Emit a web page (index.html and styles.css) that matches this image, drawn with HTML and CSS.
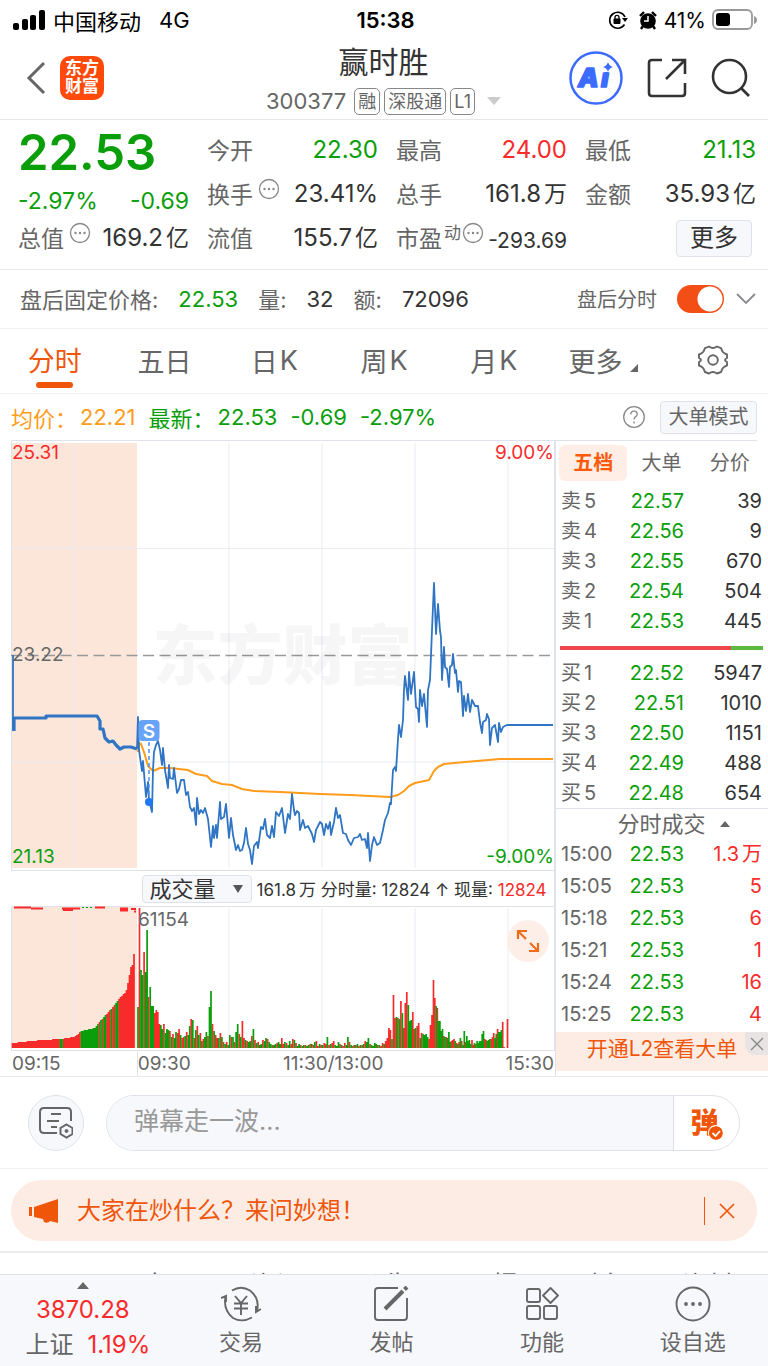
FILE: index.html
```html
<!DOCTYPE html>
<html lang="zh-CN">
<head>
<meta charset="utf-8">
<meta name="viewport" content="width=device-width, initial-scale=1">
<title>赢时胜 300377</title>
<link rel="stylesheet" href="styles.css">
</head>
<body>
<div class="status">
  <div class="status-side">
    <svg width="32" height="20" viewBox="0 0 32 20"><rect x="0" y="13" width="6" height="7" rx="2"/><rect x="9" y="9" width="6" height="11" rx="2"/><rect x="17" y="5" width="6" height="15" rx="2"/><rect x="26" y="0" width="6" height="20" rx="2"/></svg>
    <span class="carrier">中国移动</span><span>4G</span>
  </div>
  <b class="clock">15:38</b>
  <div class="status-side status-right">
    <svg width="20" height="20" viewBox="0 0 20 20"><path d="M16.500 14.500A8 8 0 1 1 17 7" fill="none" stroke="#000" stroke-width="1.600"/><path d="M14 8h6l-3 4z"/><rect x="5.500" y="8.500" width="7" height="5.500" rx="1"/><path d="M7 9V7.300a2 2 0 0 1 4 0V9" fill="none" stroke="#000" stroke-width="1.300"/></svg>
    <svg class="alarm" width="20" height="20" viewBox="0 0 20 20"><circle cx="10" cy="11" r="7.800"/><path d="M2 6l4-4M18 6l-4-4M5 16l-2 3M15 16l2 3" stroke="#000" stroke-width="2.400"/><path d="M10 6v5H6" fill="none" stroke="#fff" stroke-width="1.500"/></svg>
    <span>41%</span>
    <svg width="46" height="22" viewBox="0 0 46 22"><rect x="1" y="1" width="39" height="19" rx="5" fill="none" stroke="#999" stroke-width="1.800"/><rect x="4" y="4" width="14" height="13" rx="3"/><path d="M42 7q3 1 3 4t-3 4z" fill="#999"/></svg>
  </div>
</div>

<header class="head">
  <div class="head-left">
    <button class="plain" aria-label="返回"><svg width="20" height="34" viewBox="0 0 20 34"><path d="M18 2L3 17l15 15" fill="none" stroke="#666" stroke-width="3"/></svg></button>
    <div class="logo">东方<br>财富</div>
  </div>
  <div class="head-title">
    <h1>赢时胜</h1>
    <div class="code"><span>300377</span><i>融</i><i>深股通</i><i>L1</i><svg width="14" height="8" viewBox="0 0 14 8"><path d="M0 0h14L7 8z" fill="#ccc"/></svg></div>
  </div>
  <div class="head-right">
    <button class="plain" aria-label="Ai"><svg width="54" height="54" viewBox="0 0 54 54"><circle cx="27" cy="27" r="25.500" fill="#fff" stroke="#3b6cff" stroke-width="2.500"/><g fill="#3b6cff" stroke="#3b6cff" stroke-width="1.500" stroke-linejoin="round"><text x="9" y="36" class="ai-text">A</text><text x="32" y="36" class="ai-text">i</text></g><path d="M33 12h10v9H33z" fill="#fff"/><path d="M39 11q1 4 5 5-4 1-5 5-1-4-5-5 4-1 5-5z" fill="#3b6cff"/></svg></button>
    <button class="plain" aria-label="分享"><svg width="40" height="40" viewBox="0 0 40 40"><path d="M15 2H5q-3 0-3 3v30q0 3 3 3h30q3 0 3-3V25M25 2h13v14M37 3L19 21" fill="none" stroke="#333" stroke-width="2.600"/></svg></button>
    <button class="plain" aria-label="搜索"><svg width="40" height="40" viewBox="0 0 40 40"><circle cx="18.500" cy="18.500" r="16.500" fill="none" stroke="#333" stroke-width="2.600"/><path d="M30 30l8 8" stroke="#333" stroke-width="2.600"/></svg></button>
  </div>
</header>

<section class="quote">
  <div class="col">
    <strong class="price">22.53</strong>
    <div class="kv change"><b>-2.97%</b><b>-0.69</b></div>
    <div class="kv"><span>总值<svg class="dots" viewBox="0 0 22 22"><use href="#more-dots"/></svg></span><b>169.2<i>亿</i></b></div>
  </div>
  <div class="col">
    <div class="kv"><span>今开</span><b class="green">22.30</b></div>
    <div class="kv"><span>换手<svg class="dots" viewBox="0 0 22 22"><use href="#more-dots"/></svg></span><b>23.41%</b></div>
    <div class="kv"><span>流值</span><b>155.7<i>亿</i></b></div>
  </div>
  <div class="col">
    <div class="kv"><span>最高</span><b class="red">24.00</b></div>
    <div class="kv"><span>总手</span><b>161.8<i>万</i></b></div>
    <div class="kv pe"><span>市盈<sup>动</sup><svg class="dots tight" viewBox="0 0 22 22"><use href="#more-dots"/></svg></span><b>-293.69</b></div>
  </div>
  <div class="col">
    <div class="kv"><span>最低</span><b class="green">21.13</b></div>
    <div class="kv"><span>金额</span><b>35.93<i>亿</i></b></div>
    <div class="kv end"><button class="box more">更多</button></div>
  </div>
</section>

<section class="after">
  <span>盘后固定价格:</span><b class="green">22.53</b><span>量:</span><b>32</b><span>额:</span><b>72096</b>
  <label class="switch-label" for="after-switch">盘后分时</label>
  <input class="switch" id="after-switch" type="checkbox" checked>
  <button class="plain" aria-label="展开"><svg width="20" height="12" viewBox="0 0 20 12"><path d="M1 1l9 9 9-9" fill="none" stroke="#8a8a92" stroke-width="1.800"/></svg></button>
</section>

<nav class="tabs">
  <button class="on">分时</button><button>五日</button><button>日<i>K</i></button><button>周<i>K</i></button><button>月<i>K</i></button>
  <button>更多<svg class="corner" width="8" height="8" viewBox="0 0 8 8"><path d="M8 0v8H0z" fill="#666"/></svg></button>
  <button aria-label="设置"><svg width="32" height="32" viewBox="0 0 32 32" fill="none" stroke="#666" stroke-width="1.900"><path d="M16 4q2 0 4-1.500l4 1.700q1 2.300 1.500 3.300Q27 9.500 30 10.500v3.500q-2 1-2 2t2 2v3.500q-3 1-4.500 3Q25 26 24 28l-4 1.500Q18 28 16 28t-4 1.500L8 28q-1-2-1.500-3.500-1.500-2-4.500-3V18q2-1 2-2t-2-2v-3.500q3-1 4.500-3Q7 6.500 8 4.200l4-1.700Q14 4 16 4z" stroke-linejoin="round"/><circle cx="16" cy="16" r="4.800"/></svg></button>
</nav>

<div class="legend">
  <span class="amber name">均价：</span><span class="amber n1">22.21</span><span class="name">最新：</span><span class="n1">22.53</span><span class="n1">-0.69</span><span>-2.97%</span>
  <button class="plain help" aria-label="帮助"><svg width="24" height="24" viewBox="0 0 24 24"><circle cx="12" cy="12" r="10.300" fill="none" stroke="#888" stroke-width="1.300"/><path d="M8.800 9.500q0-3.300 3.200-3.300t3.200 3q0 1.500-1.800 2.700-1.400 1-1.400 2.600M12 16.500v2" fill="none" stroke="#888" stroke-width="1.300"/></svg></button>
  <button class="box mode">大单模式</button>
</div>

<main class="panel">
  <div class="charts">
    <div class="plot">
      <svg class="canvas" viewBox="11 440 544 430">
        <rect x="11" y="443" width="126" height="425" fill="#fce6da"/>
        <path class="gridline" d="M74 443V868M229 443V868M322 443V868M415 443V868M508 443V868M11 548.500H555M11 762H555"/>
        <path d="M11.500 870V440.500H554.500V870" fill="none" stroke="#dfe2ea"/>
        <path d="M11 655.500H555" stroke="#999" stroke-width="1.400" stroke-dasharray="11 5.500"/>
        <path id="avg-line" fill="none" stroke="#ff9c1b" stroke-width="2" stroke-linejoin="round"/>
        <path id="pre-line" fill="none" stroke="#3075c4" stroke-width="3.200" stroke-linejoin="round"/>
        <path id="price-line" fill="none" stroke="#3075c4" stroke-width="1.800" stroke-linejoin="round"/>
        <path d="M149 742v58" stroke="#4f93f8" stroke-width="1.500" stroke-dasharray="4 3"/>
        <circle cx="149" cy="802" r="4" fill="#1f78f0"/>
        <rect x="138.500" y="720" width="21" height="21" rx="4" fill="#67a4f9"/>
        <text x="149" y="737.500" text-anchor="middle" class="mark">S</text>
      </svg>
      <span class="water">东方财富</span>
      <span class="lab tl red">25.31</span><span class="lab tr red">9.00%</span>
      <span class="lab ml">23.22</span>
      <span class="lab bl green">21.13</span><span class="lab br green">-9.00%</span>
    </div>
    <div class="indicator">
      <div class="pick"><select aria-label="指标"><option>成交量</option></select><svg width="10" height="8" viewBox="0 0 10 8"><path d="M0 0h10L5 8z" fill="#555"/></svg></div>
      <span class="vol-text">161.8<i>万</i> 分时量: 12824 ↑ 现量: <em>12824</em></span>
    </div>
    <div class="plot">
      <svg class="canvas" viewBox="11 906 544 144">
        <rect x="11" y="907" width="126" height="141" fill="#fce6da"/>
        <path class="gridline" d="M74 908V1048M229 908V1048M322 908V1048M415 908V1048M508 908V1048"/>
        <path d="M11.500 1050V906.500H554.500V1050" fill="none" stroke="#dfe2ea"/>
        <path id="bars-red" stroke="#f82b2b" stroke-width="1.700"/>
        <path id="bars-green" stroke="#0a9e0a" stroke-width="1.700"/>
        <path d="M14 907.500h17M31 908.500h12M62 908.500h18M63 910h10M120 908.500h8M131 909h5M95 907.500h10M120 910.500h8M134 911.500h2" stroke="#f82b2b" stroke-width="2"/>
        <path d="M82 907.500h12" stroke="#0a9e0a" stroke-dasharray="2 2"/>
      </svg>
      <span class="lab vmax">61154</span>
      <button class="expand" aria-label="全屏"><svg width="24" height="24" viewBox="0 0 24 24" fill="none" stroke="#f26a1b" stroke-width="2.200"><path d="M2 10V2h9M2 2l8 8M22 14v8h-9M22 22l-8-8"/></svg></button>
    </div>
    <div class="times"><span>09:15</span><span class="open">09:30</span><span>11:30/13:00</span><span>15:30</span></div>
  </div>

  <aside class="book">
    <div class="book-tabs"><button class="on">五档</button><button>大单</button><button>分价</button></div>
    <table class="levels">
      <tr><th>卖<i>5</i></th><td>22.57</td><td>39</td></tr>
      <tr><th>卖<i>4</i></th><td>22.56</td><td>9</td></tr>
      <tr><th>卖<i>3</i></th><td>22.55</td><td>670</td></tr>
      <tr><th>卖<i>2</i></th><td>22.54</td><td>504</td></tr>
      <tr><th>卖<i>1</i></th><td>22.53</td><td>445</td></tr>
    </table>
    <div class="ratio"></div>
    <table class="levels">
      <tr><th>买<i>1</i></th><td>22.52</td><td>5947</td></tr>
      <tr><th>买<i>2</i></th><td>22.51</td><td>1010</td></tr>
      <tr><th>买<i>3</i></th><td>22.50</td><td>1151</td></tr>
      <tr><th>买<i>4</i></th><td>22.49</td><td>488</td></tr>
      <tr><th>买<i>5</i></th><td>22.48</td><td>654</td></tr>
    </table>
    <button class="deal-head">分时成交<svg width="10" height="6" viewBox="0 0 10 6"><path d="M0 6h10L5 0z" fill="#666"/></svg></button>
    <table class="levels deals">
      <tr><th>15:00</th><td>22.53</td><td>1.3<i>万</i></td></tr>
      <tr><th>15:05</th><td>22.53</td><td>5</td></tr>
      <tr><th>15:18</th><td>22.53</td><td>6</td></tr>
      <tr><th>15:21</th><td>22.53</td><td>1</td></tr>
      <tr><th>15:24</th><td>22.53</td><td>16</td></tr>
      <tr><th>15:25</th><td>22.53</td><td>4</td></tr>
    </table>
    <div class="promo"><a href="#">开通L2查看大单</a><button class="promo-x" aria-label="关闭"><svg width="14" height="14" viewBox="0 0 14 14"><path d="M1 1l12 12M13 1L1 13" stroke="#888" stroke-width="1.400"/></svg></button></div>
  </aside>
</main>

<section class="danmu">
  <button class="round" aria-label="弹幕设置"><svg width="34" height="32" viewBox="0 0 34 32" fill="none" stroke="#666" stroke-width="2"><path d="M18 26H5q-4 0-4-4V5q0-4 4-4h23q4 0 4 4v9M12 7h10M8 14h12M12 20h6"/><path d="M27.500 17.500l6 3.500v6l-6 3.500-6-3.500v-6z" fill="#f7f8fb"/><circle cx="27.500" cy="24" r="1.500" fill="#666" stroke-width="1"/></svg></button>
  <div class="bullet"><input type="text" aria-label="弹幕" placeholder="弹幕走一波..."><button class="send">弹<svg width="14" height="14" viewBox="0 0 14 14"><circle cx="7" cy="7" r="7" fill="#f0560a"/><path d="M3.500 7l3 3 4.500-5" fill="none" stroke="#fff" stroke-width="1.800"/></svg></button></div>
</section>

<section class="ask">
  <div class="ask-pill">
    <svg width="30" height="26" viewBox="0 0 30 26" fill="#f0560a"><path d="M0 9h3v9H0zM5 9L29 1v24l-8-2q-2 3-6 1l-1-3-9-2z"/></svg>
    <a href="#">大家在炒什么？来问妙想！</a>
    <button class="ask-x" aria-label="关闭"><svg width="16" height="16" viewBox="0 0 16 16"><path d="M1 1l14 14M15 1L1 15" stroke="#f0560a" stroke-width="1.700"/></svg></button>
  </div>
</section>

<nav class="subtabs"><a class="on" href="#">股吧</a><a href="#">盘口</a><a href="#">资讯</a><a href="#">公告</a><a href="#">研报</a><a href="#">财务</a><a href="#">资料</a></nav>

<nav class="bottom">
  <a class="index" href="#"><svg width="12" height="7" viewBox="0 0 12 7"><path d="M0 7h12L6 0z" fill="#666"/></svg><span class="red">3870.28</span><span class="index-name">上证<b class="red">1.19%</b></span></a>
  <a href="#"><svg width="40" height="36" viewBox="0 0 40 36" fill="none" stroke="#666" stroke-width="1.900"><path d="M11 4.500Q20-1 29 4.500q10 8 7 20M31 31.500Q21 37 12 32 2 24 4.500 11M0 12l5-2v6M40 23l-5 3v-6M14 10l6 7 6-7M13 17.500h14M13 22.500h14M20 17v12"/></svg>交易</a>
  <a href="#"><svg width="36" height="36" viewBox="0 0 36 36" fill="none" stroke="#666" stroke-width="1.900"><path d="M25 2H5Q2 2 2 5v26q0 3 3 3h26q3 0 3-3V12"/><path d="M12 23L30 5M31.500 3.500L34 1" stroke-width="4"/></svg>发帖</a>
  <a href="#"><svg width="36" height="36" viewBox="0 0 36 36" fill="none" stroke="#666" stroke-width="1.900"><rect x="3" y="3" width="13" height="13" rx="2"/><rect x="3" y="20" width="13" height="13" rx="2"/><rect x="20" y="20" width="13" height="13" rx="2"/><path d="M26.500 2l7.500 7.500-7.500 7.500L19 9.500z" stroke-linejoin="round"/></svg>功能</a>
  <a href="#"><svg width="36" height="36" viewBox="0 0 36 36"><circle cx="18" cy="18" r="16.500" fill="none" stroke="#666" stroke-width="1.900"/><g fill="#666"><circle cx="11" cy="18" r="1.900"/><circle cx="18" cy="18" r="1.900"/><circle cx="25" cy="18" r="1.900"/></g></svg>设自选</a>
</nav>

<svg width="0" height="0" class="defs"><symbol id="more-dots" viewBox="0 0 22 22"><circle cx="11" cy="11" r="9.500" fill="none" stroke="#888" stroke-width="1.300"/><g fill="#888"><circle cx="6.500" cy="11" r="1.200"/><circle cx="11" cy="11" r="1.200"/><circle cx="15.500" cy="11" r="1.200"/></g></symbol></svg>
<script src="chart.js"></script>
</body>
</html>
```
FILE: styles.css
```css
* { box-sizing: border-box; }
body { margin: 0; background: #fff; color: #333; font-family: Inter, "Noto Sans CJK SC", sans-serif; font-size: 22px; }
button, input, select { font: inherit; color: inherit; margin: 0; }
button { border: 0; background: none; padding: 0; cursor: pointer; }
a { color: inherit; text-decoration: none; }
b { font-weight: 400; }
i { font-style: normal; margin-left: 3px; }
svg { display: block; flex: none; }
.defs { position: absolute; }
.green { color: #0a9e0a; }
.red { color: #f82b2b; }
.plain { display: block; }

.status { display: grid; grid-template-columns: 1fr auto 1fr; align-items: center; height: 40px; padding: 0 10px 0 13px; color: #000; }
.status-side { display: flex; align-items: center; gap: 8px; }
.carrier { margin-right: 10px; }
.status-right { justify-content: flex-end; gap: 6px; font-size: 21px; }
.alarm { margin-left: 4px; }
.clock { font-weight: 600; }

.head { display: grid; grid-template-columns: 1fr auto 1fr; align-items: center; height: 80px; border-bottom: 1px solid #e6e6e6; padding: 0 17px 0 26px; }
.head-left { display: flex; align-items: center; gap: 14px; padding-bottom: 4px; }
.logo { width: 44px; height: 44px; border-radius: 10px; background: #ff4a0b; color: #fff; font-size: 17px; line-height: 18px; font-weight: 700; text-align: center; padding-top: 3px; }
.head-title { text-align: center; padding: 2px 10px 0 0; }
h1 { margin: 0; font-size: 30px; font-weight: 400; line-height: 40px; }
.code { display: flex; align-items: center; gap: 4px; line-height: 38px; color: #666; }
.code span { margin-right: 4px; }
.code i { margin: 0; font-size: 18px; line-height: 25px; height: 27px; border: 1px solid #888; border-radius: 5px; padding: 0 3px; }
.code svg { margin-left: 8px; }
.head-right { display: flex; align-items: center; justify-content: flex-end; gap: 24px; padding-bottom: 4px; }
.ai-text { font: italic 900 26px Inter, sans-serif; }

.quote { display: grid; grid-template-columns: repeat(4, minmax(0, 1fr)); gap: 18px; padding: 8px 12px 9px 18px; border-bottom: 1px solid #e9e9ee; font-size: 23px; }
.kv { display: flex; align-items: center; justify-content: space-between; height: 44px; white-space: nowrap; color: #333; }
.kv > span { display: flex; align-items: center; color: #666; padding-bottom: 3px; }
.kv > b { font-size: 24px; line-height: 32px; }
.kv i { font-size: 23px; }
.change { height: 32px; color: #0a9e0a; }
.change > b { font-size: 23px; padding-top: 2px; }
.price { display: block; height: 56px; line-height: 50px; font-size: 49px; font-weight: 600; color: #0a9e0a; }
.dots { width: 22px; height: 22px; margin: 0 0 8px 5px; }
.dots.tight { margin-left: 1px; }
sup { font-size: 17px; line-height: 20px; margin: 0 0 8px 2px; }
.pe > b { font-size: 21px; padding-top: 5px; }
.end { justify-content: flex-end; }
.box { border: 1px solid #dfe2ea; border-radius: 4px; background: #f7f8fb; }
.more { width: 76px; height: 37px; margin-right: 4px; line-height: 32px; font-size: 24px; color: #333; }

.after { display: flex; align-items: center; height: 59px; padding: 0 12px 0 20px; gap: 20px; border-bottom: 1px solid #f2f2f4; color: #666; white-space: nowrap; }
.after span, .after label { padding-bottom: 2px; }
.after b:not(.green) { color: #333; }
.switch-label { margin-left: auto; font-size: 20px; }
.switch { appearance: none; width: 47px; height: 28px; border-radius: 14px; background: radial-gradient(circle at 33px 14px, #fff 12px, #f24e16 13px); }
.after .plain { margin-left: -8px; }

.tabs { display: grid; grid-template-columns: repeat(7, 1fr); height: 65px; border-bottom: 1px solid #f2f2f4; font-size: 27px; color: #666; }
.tabs button { display: flex; align-items: center; justify-content: center; padding-bottom: 2px; }
.tabs i { margin-left: 2px; }
.tabs .on { flex-direction: column; padding: 8px 0 0; line-height: 40px; color: #f0560a; }
.tabs .on::after { content: ""; width: 37px; height: 6px; border-radius: 3px; background: #f0560a; }
.corner { margin: 16px 0 0 8px; }

.legend { display: flex; align-items: center; height: 46px; padding: 0 11px; color: #0a9e0a; white-space: nowrap; }
.legend .amber { color: #ff9c1b; }
.name { margin-right: 3px; }
.n1 { margin-right: 13px; }
.help { margin-left: auto; }
.mode { width: 97px; height: 33px; margin-left: 14px; font-size: 20px; line-height: 28px; color: #666; }

.panel { display: grid; grid-template-columns: minmax(0, 1fr) 213px; padding-left: 11px; border-bottom: 1px solid #e9e9ee; }
.plot { position: relative; border-bottom: 1px solid #dfe2ea; }
.canvas { width: 100%; }
.gridline { fill: none; stroke: #e9ebf1; stroke-width: 1; }
.mark { font: 600 19px Inter, sans-serif; fill: #fff; }
.lab { position: absolute; font-size: 19px; line-height: 20px; }
.tl { top: 3px; left: 1px; }
.tr { top: 3px; right: 1px; }
.ml { top: 50%; left: 1px; margin-top: -10px; color: #666; }
.bl { bottom: 3px; left: 1px; }
.br { bottom: 3px; right: 1px; }
.water { position: absolute; left: 26%; top: 41%; font-size: 65px; line-height: 80px; font-weight: 900; color: rgba(0, 0, 0, .035); }
.indicator { display: flex; align-items: center; height: 35px; gap: 5px; padding-left: 24%; border-right: 1px solid #dfe2ea; }
.pick { position: relative; width: 110px; flex: none; }
.pick select { display: block; width: 100%; height: 28px; appearance: none; border: 1px solid #dfe2ea; border-radius: 4px; background: #f7f8fb; padding: 0 7px; line-height: 24px; }
.pick svg { position: absolute; right: 9px; top: 10px; pointer-events: none; }
.vol-text { font-size: 17px; white-space: nowrap; }
.vol-text em { font-style: normal; color: #f82b2b; }
.vmax { left: 127px; top: 4px; color: #666; }
.expand { position: absolute; right: 6px; top: 14px; width: 42px; height: 42px; border-radius: 50%; background: rgba(253, 236, 228, .85); display: grid; place-items: center; }
.times { display: grid; grid-template-columns: 23% 27% 1fr auto; font-size: 19px; line-height: 25px; color: #666; padding: 0 1px; }
.open { border-left: 1px solid #dfe2ea; }

.book { border-left: 1px solid #dfe2ea; }
.book-tabs { display: flex; padding: 5px 4px 5px 3px; background: linear-gradient(#dfe2ea, #dfe2ea) 0 0 / calc(100% - 11px) 1px no-repeat; font-size: 20px; color: #666; }
.book-tabs button { flex: 1; height: 36px; line-height: 32px; border-radius: 6px; white-space: nowrap; }
.book-tabs .on { background: #ffeee6; color: #ff5a0a; font-weight: 700; }
.levels { width: 100%; border-collapse: collapse; font-size: 20px; table-layout: fixed; }
.levels tr { height: 30px; }
.levels th { width: 62px; padding: 0 0 0 5px; text-align: left; font-weight: 400; color: #666; white-space: nowrap; line-height: 28px; }
.levels td { padding: 0 6px 0 0; text-align: right; color: #333; line-height: 28px; }
.levels td:nth-child(2) { width: 72px; color: #0a9e0a; }
.ratio { height: 4px; margin: 10px 5px 8px 4px; background: linear-gradient(90deg, #f0454b 84%, #5cb83e 84%); }
.deal-head { display: flex; width: 100%; height: 30px; align-items: center; justify-content: center; gap: 14px; padding-left: 23px; border-top: 1px solid #dfe2ea; color: #666; line-height: 28px; }
.deals tr { height: 32px; }
.levels.deals td:last-child { color: #f82b2b; }
.promo { position: relative; height: 39px; margin-top: 2px; background: #fdece4; color: #f0560a; font-size: 21px; line-height: 34px; text-align: center; }
.promo-x { position: absolute; right: 0; top: 0; width: 23px; height: 23px; background: #e9e4e4; border-bottom-left-radius: 10px; display: grid; place-items: center; }

.danmu { display: flex; gap: 22px; padding: 18px 28px 17px; border-bottom: 1px solid #f2f2f4; }
.round { width: 56px; height: 56px; flex: none; border: 1px solid #dfe2ea; border-radius: 50%; background: #f7f8fb; display: grid; place-items: center; }
.bullet { flex: 1; display: flex; border: 1px solid #dfe2ea; border-radius: 28px; overflow: hidden; }
.bullet input { flex: 1; min-width: 0; border: 0; background: #f7f8fb; padding: 0 27px 4px; font-size: 25px; }
.bullet input::placeholder { color: #999; }
.send { position: relative; width: 66px; border-left: 1px solid #dfe2ea; color: #f0560a; font-size: 28px; font-weight: 900; line-height: 48px; padding-right: 4px; }
.send svg { position: absolute; right: 16px; bottom: 10px; border-radius: 50%; box-shadow: 0 0 0 1px #fff; }

.ask { padding: 11px 11px 10px; border-bottom: 2px solid #ededf0; }
.ask-pill { display: flex; align-items: center; gap: 18px; height: 61px; border-radius: 31px; background: #fdece4; color: #f0560a; padding: 0 22px 0 18px; font-size: 24px; line-height: 56px; }
.ask-x { margin-left: auto; padding: 6px 0 6px 14px; border-left: 1px solid #f0560a; }

.subtabs { display: grid; grid-template-columns: repeat(7, 1fr); padding: 14px 6px 60px; font-size: 26px; text-align: center; line-height: 38px; color: #666; }
.subtabs .on { color: #f0560a; }
.bottom { position: fixed; left: 0; right: 0; bottom: 0; display: grid; grid-template-columns: repeat(5, 1fr); height: 92px; padding-left: 15px; background: #f7f8fb; border-top: 1px solid #dfe2ea; color: #666; font-size: 22px; }
.bottom a { display: flex; flex-direction: column; align-items: center; padding-top: 11px; line-height: 32px; gap: 4px; white-space: nowrap; }
.bottom .index { padding: 7px 15px 0 0; gap: 5px; font-size: 24px; }
.index-name { display: flex; gap: 14px; line-height: 28px; padding-left: 10px; }
```
FILE: chart.js
```javascript
const path = pts => 'M' + pts.trim().split(/\s+/).join('L');
const set = (id, d) => document.getElementById(id).setAttribute('d', d);

set('pre-line', path(`14,731 14,718 46,718 46,716 97,716 100,721 100,729 103,729 105,738 109,742
 113,741 116,745 120,749 124,747 131,747 137,749`));
set('price-line', 'M13,655L13,731' + path(`137,749 138,717 139,750 142,771 143,761 146,797 148,782 149,800
 152,812 153,770 154,752 156,745 158,741 160,750 162,765 163,748 165,770 168,788 169,765 170,778 173,779 174,768
 177,793 179,789 181,780 184,780 186,795 188,792 190,807 192,811 194,808 196,825 197,798 199,814 201,810 203,813
 205,808 208,819 211,847 213,826 214,838 216,825 217,838 220,802 221,819 224,817 226,804 229,838 231,818 233,835
 236,850 238,845 240,851 242,850 244,843 246,828 248,844 250,850 252,864 254,846 257,842 258,848 261,827 263,829
 265,819 267,835 270,838 272,826 274,837 276,812 279,816 282,808 285,833 288,814 290,819 292,794 294,810 295,815
 297,811 299,813 300,830 303,820 305,828 308,826 312,834 314,842 316,830 320,822 322,824 324,835 326,824 328,829
 330,822 331,835 334,822 336,808 338,818 340,815 343,833 346,834 348,840 351,845 354,838 358,837 360,834 362,840
 365,839 367,848 368,833 370,861 372,845 374,837 377,845 380,843 383,830 385,820 388,813 390,803 391,804 393,770
 395,767 396,771 398,739 399,725 401,737 403,720 404,690 405,676 408,700 409,672 411,694 414,672 416,707 418,709
 419,722 420,690 422,706 424,694 427,727 428,690 430,680 432,630 434,583 436,634 438,604 440,631 441,637 442,680
 444,647 445,667 447,669 449,687 450,667 452,665 453,654 455,673 456,670 458,692 459,681 461,682 463,716 464,696
 466,711 468,694 470,712 472,700 475,706 478,706 480,722 482,733 483,722 486,720 487,714 489,719 490,745 492,728
 495,725 498,742 499,723 501,732 503,727 507,725 553,725`));
set('avg-line', path(`138,752 139,743 141,744 144,752 148,766 153,771 160,768 170,768 188,770 196,774 207,776 212,781
 222,784 232,785 242,789 254,791 280,792 320,794 350,795 390,797 398,795 404,791 409,786 415,783 429,780 434,771
 438,767 444,764 465,762 500,759 553,759`));

/* Volume after the open: each run is [first x, last x, bars], r = up, g = down */
const runs = [
  [138, 211, `g41 r140 g78 g73 r96 g76 g118 r51 g61 g42 g42 r35 r38 r36 r24 g23 g19 r24 g15 g19 g18 r17 g11 r14 g10
   g16 r15 r19 g13 r10 r11 g12 r16 g13 g22 r29 g28 r10 g18 r22 g13 r15 g7 r9 g11 g16 r12 g41 g57`],
  [212.5, 392, `r24 g17 r13 r10 g10 r15 g11 r6 g4 r6 g3 g13 r11 g11 r6 g16 g24 r14 g11 r27 r10 g8 r7 g6 g7 r12 g19 r8
   g5 r6 g3 g4 r8 g7 g10 r9 g6 g4 r3 g3 g4 r5 g6 g4 r10 r4 g6 r5 g3 g7 r4 r9 g8 r5 g2 g4 r3 g2 g3 r3 g2 g3 r4 g4 r3
   g6 r7 r2 g4 r3 g3 r5 r4 g11 r3 g4 r5 r7 g3 g2 g6 r4 g3 r2 r5 g3 g11 r6 g3 r2 g3 r3 g4 r2 g3 r3 g4 r7 g6 g10 r4
   g3 g2 g5 g4 r3 g3 r2 r5 g4 r7 r10 r20 r18 g9`],
  [393.5, 432, `r53 r30 g31 r30 g29 r47 g35 r20 r45 r56 g43 g27 g28 r36 r19 g20 r22 r25 g10 r15 g14 g13 g14 g11 r9
   r23 r33`],
  [433.5, 504, `r68 r50 g42 r40 g27 g27 g17 g19 r12 g11 r11 g10 g16 g6 r7 r8 r9 g7 r5 g4 r6 g10 r7
   g3 g17 r6 g12 g7 g8 g4 r8 r3 g5 r4 g7 g5 g7 g7 g14 g17 r9 r8 g7 g8 g9 r9 r11 r15 g10 g14 r19 g16 g16 g18 r26 r1`],
  [507.5, 507.5, 'r29']
];
const bars = { r: '', g: '' };
const base = 1048;
for (const [from, to, text] of runs) {
  const list = text.split(/\s+/);
  const gap = (to - from) / Math.max(1, list.length - 1);
  list.forEach((v, i) => {
    bars[v[0]] += `M${(from + gap * i).toFixed(1)} ${base}v-${v.slice(1)}`;
  });
}

/* Call auction: matched volume grows toward the open */
const steps = [[12, 5], [43, 8], [62, 9], [74, 11], [82, 17], [95, 20], [103, 30], [112, 40], [118, 48], [126, 56], [129, 70], [131, 81], [133, 84], [135, 104]];
const greens = [[60, 62], [81, 95], [96, 99], [100, 102], [104, 106], [111, 112], [116, 118]];
for (let x = 12.5; x <= 135; x += 1.5) {
  const k = steps.findIndex(s => s[0] >= x);
  const [x0, h0] = steps[k - 1], [x1, h1] = steps[k];
  const h = Math.round(h0 + (h1 - h0) * (x - x0) / (x1 - x0));
  const down = greens.some(([a, b]) => x >= a && x <= b);
  bars[down ? 'g' : 'r'] += `M${x} ${base}v-${h}`;
}
set('bars-red', bars.r);
set('bars-green', bars.g);
```
